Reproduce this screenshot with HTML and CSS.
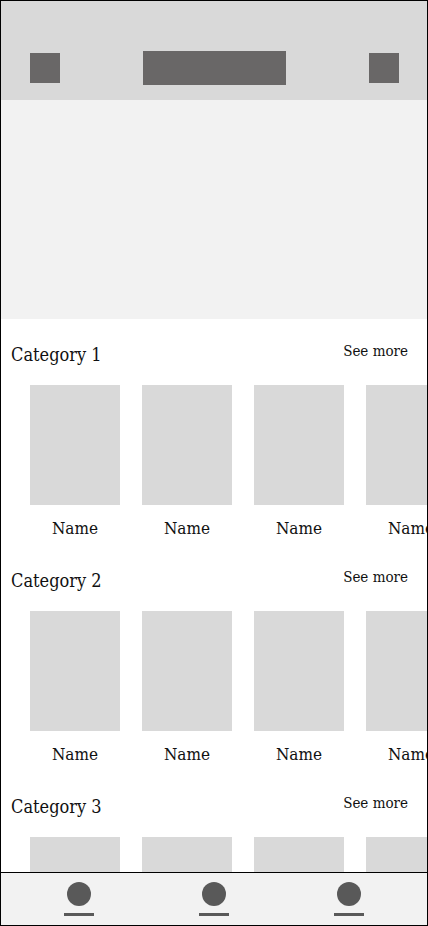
FILE: index.html
```html
<!DOCTYPE html>
<html lang="en">
<head>
<meta charset="utf-8">
<title>Wireframe</title>
<link rel="stylesheet" href="styles.css">
</head>
<body>
<div class="frame">
  <main class="main">
    <header class="topbar">
      <div class="icon-box"></div>
      <div class="title-box"></div>
      <div class="icon-box"></div>
    </header>
    <div class="hero"></div>

    <section class="category">
      <div class="cat-head">
        <h2 class="cat-title">Category 1</h2>
        <span class="see-more">See more</span>
      </div>
      <div class="cards">
        <div class="card"><div class="thumb"></div><div class="name">Name</div></div>
        <div class="card"><div class="thumb"></div><div class="name">Name</div></div>
        <div class="card"><div class="thumb"></div><div class="name">Name</div></div>
        <div class="card"><div class="thumb"></div><div class="name">Name</div></div>
      </div>
    </section>

    <section class="category">
      <div class="cat-head">
        <h2 class="cat-title">Category 2</h2>
        <span class="see-more">See more</span>
      </div>
      <div class="cards">
        <div class="card"><div class="thumb"></div><div class="name">Name</div></div>
        <div class="card"><div class="thumb"></div><div class="name">Name</div></div>
        <div class="card"><div class="thumb"></div><div class="name">Name</div></div>
        <div class="card"><div class="thumb"></div><div class="name">Name</div></div>
      </div>
    </section>

    <section class="category">
      <div class="cat-head">
        <h2 class="cat-title">Category 3</h2>
        <span class="see-more">See more</span>
      </div>
      <div class="cards">
        <div class="card"><div class="thumb"></div><div class="name">Name</div></div>
        <div class="card"><div class="thumb"></div><div class="name">Name</div></div>
        <div class="card"><div class="thumb"></div><div class="name">Name</div></div>
        <div class="card"><div class="thumb"></div><div class="name">Name</div></div>
      </div>
    </section>
  </main>

  <nav class="bottom-nav">
    <div class="nav-item"><span class="dot"></span><span class="bar"></span></div>
    <div class="nav-item"><span class="dot"></span><span class="bar"></span></div>
    <div class="nav-item"><span class="dot"></span><span class="bar"></span></div>
  </nav>
</div>
</body>
</html>
```

FILE: styles.css
```css
* {
  box-sizing: border-box;
}

html, body {
  margin: 0;
  padding: 0;
  background: #ffffff;
}

.frame {
  width: 428px;
  height: 926px;
  border: 1px solid #000000;
  display: flex;
  flex-direction: column;
  overflow: hidden;
  font-family: "DejaVu Serif Condensed", "DejaVu Serif", "Liberation Serif", serif;
  font-stretch: condensed;
  color: #111111;
}

.main {
  flex: 1;
  overflow: hidden;
  min-height: 0;
}

.topbar {
  height: 99px;
  background: #d9d9d9;
  display: flex;
  align-items: center;
  justify-content: space-between;
  padding: 50px 28px 15px 29px;
}

.icon-box {
  width: 30px;
  height: 30px;
  background: #696767;
}

.title-box {
  width: 143px;
  height: 34px;
  background: #696767;
}

.hero {
  height: 219px;
  background: #f2f2f2;
}

.category {
  padding: 24px 0 7px;
}

.cat-head {
  display: flex;
  justify-content: space-between;
  align-items: flex-start;
  padding: 0 19px 0 10px;
}

.cat-title {
  margin: 0;
  font-size: 18px;
  font-weight: normal;
  line-height: 24px;
}

.see-more {
  font-size: 15px;
  line-height: 16px;
}

.cards {
  display: flex;
  gap: 22px;
  padding-left: 29px;
  margin-top: 18px;
}

.card {
  flex: 0 0 90px;
  width: 90px;
}

.thumb {
  height: 120px;
  background: #d9d9d9;
}

.name {
  margin-top: 13px;
  font-size: 17px;
  line-height: 20px;
  text-align: center;
  white-space: nowrap;
}

.bottom-nav {
  flex: 0 0 53px;
  border-top: 1px solid #000000;
  background: #f2f2f2;
  display: flex;
  justify-content: space-between;
  padding: 9px 63px 0;
}

.nav-item {
  width: 30px;
  display: flex;
  flex-direction: column;
  align-items: center;
  gap: 7px;
}

.dot {
  width: 24px;
  height: 24px;
  border-radius: 50%;
  background: #595959;
}

.bar {
  width: 30px;
  height: 3px;
  background: #595959;
}
```
